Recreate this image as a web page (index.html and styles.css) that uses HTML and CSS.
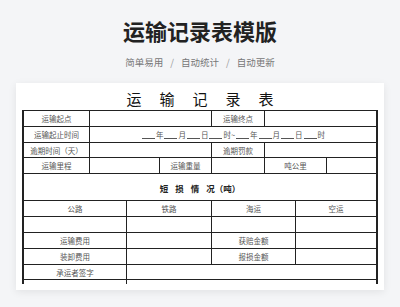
FILE: index.html
```html
<!DOCTYPE html>
<html lang="zh-CN">
<head>
<meta charset="utf-8">
<link rel="stylesheet" href="styles.css">
</head>
<body>
<header class="hero">
  <h1 class="hero-title">运输记录表模版</h1>
  <p class="hero-sub"><span>简单易用</span><span class="sep">/</span><span>自动统计</span><span class="sep">/</span><span>自动更新</span></p>
</header>
<main class="card">
  <div class="doc-title">运输记录表</div>
  <div class="sheet-clip">
    <div class="sheet">
      <div class="c c1">运输起点</div>
      <div class="c c2-4"></div>
      <div class="c c5">运输终点</div>
      <div class="c c6-8"></div>

      <div class="c c1">运输起止时间</div>
      <div class="c c2-8 date"><span class="u"></span>年<span class="u"></span>月<span class="u"></span>日<span class="u"></span>时~<span class="u"></span>年<span class="u"></span>月<span class="u"></span>日<span class="u"></span>时</div>

      <div class="c c1">逾期时间（天）</div>
      <div class="c c2-4"></div>
      <div class="c c5">逾期罚款</div>
      <div class="c c6-8"></div>

      <div class="c c1">运输里程</div>
      <div class="c c2-3"></div>
      <div class="c c4">运输重量</div>
      <div class="c c5"></div>
      <div class="c c6-7">吨公里</div>
      <div class="c c8"></div>

      <div class="c call section"><span class="sp">短损情</span>况（吨）</div>

      <div class="c a">公路</div>
      <div class="c b">铁路</div>
      <div class="c d">海运</div>
      <div class="c e">空运</div>

      <div class="c a"></div>
      <div class="c b"></div>
      <div class="c d"></div>
      <div class="c e"></div>

      <div class="c a">运输费用</div>
      <div class="c b"></div>
      <div class="c d">获赔金额</div>
      <div class="c e"></div>

      <div class="c a">装卸费用</div>
      <div class="c b"></div>
      <div class="c d">报损金额</div>
      <div class="c e"></div>

      <div class="c a">承运者签字</div>
      <div class="c b-e"></div>

      <div class="c a"></div>
      <div class="c b-e"></div>
    </div>
  </div>
</main>
</body>
</html>
```
FILE: styles.css
```css
html, body {
  margin: 0;
  padding: 0;
}
body {
  width: 400px;
  height: 307px;
  overflow: hidden;
  background: #f4f5f7;
  font-family: "Noto Sans CJK SC", "Noto Sans", sans-serif;
}
.hero {
  padding-top: 15px;
  text-align: center;
}
.hero-title {
  margin: 0;
  font-size: 22px;
  line-height: 30px;
  font-weight: 700;
  color: #222;
}
.hero-sub {
  margin: 10px 0 0;
  font-size: 9.5px;
  line-height: 14px;
  color: #777;
}
.hero-sub .sep {
  margin: 0 7px;
  color: #999;
}
.card {
  margin: 14px 16px 0;
  background: #fff;
  padding: 5px 6px 6px;
  box-shadow: 0 2px 8px rgba(0, 0, 0, 0.08);
}
.doc-title {
  text-align: center;
  font-size: 15px;
  line-height: 22px;
  letter-spacing: 18px;
  padding-left: 18px;
  color: #111;
}
.sheet-clip {
  height: 174px;
  overflow: hidden;
}
.sheet {
  display: grid;
  grid-template-columns: 65px 36px 32px 51px 52px 30px 30px 49px;
  grid-template-rows: 15px 15px 14px 15px 26px 15px 15px 15px 15px 14px 15px;
  gap: 1px;
  background: #222;
  border: 1px solid #222;
  border-left-width: 2px;
  border-right-width: 2px;
  border-bottom: none;
}
.c {
  background: #fff;
  display: flex;
  align-items: center;
  justify-content: center;
  font-size: 7.5px;
  color: #555;
  white-space: nowrap;
  overflow: hidden;
}
.c1 { grid-column: 1; }
.c2-4 { grid-column: 2 / 5; }
.c5 { grid-column: 5; }
.c6-8 { grid-column: 6 / 9; }
.c2-8 { grid-column: 2 / 9; }
.c2-3 { grid-column: 2 / 4; }
.c4 { grid-column: 4; }
.c6-7 { grid-column: 6 / 8; }
.c8 { grid-column: 8; }
.call { grid-column: 1 / 9; }
.a { grid-column: 1 / 3; }
.b { grid-column: 3 / 5; }
.d { grid-column: 5 / 7; }
.e { grid-column: 7 / 9; }
.b-e { grid-column: 3 / 9; }
.date .u {
  display: inline-block;
  width: 13px;
  height: 7px;
  border-bottom: 1px solid #555;
  margin: 0 1px;
}
.section {
  font-size: 8.5px;
  font-weight: 700;
  color: #222;
  padding-top: 2px;
}
.section .sp {
  letter-spacing: 7px;
}
```
